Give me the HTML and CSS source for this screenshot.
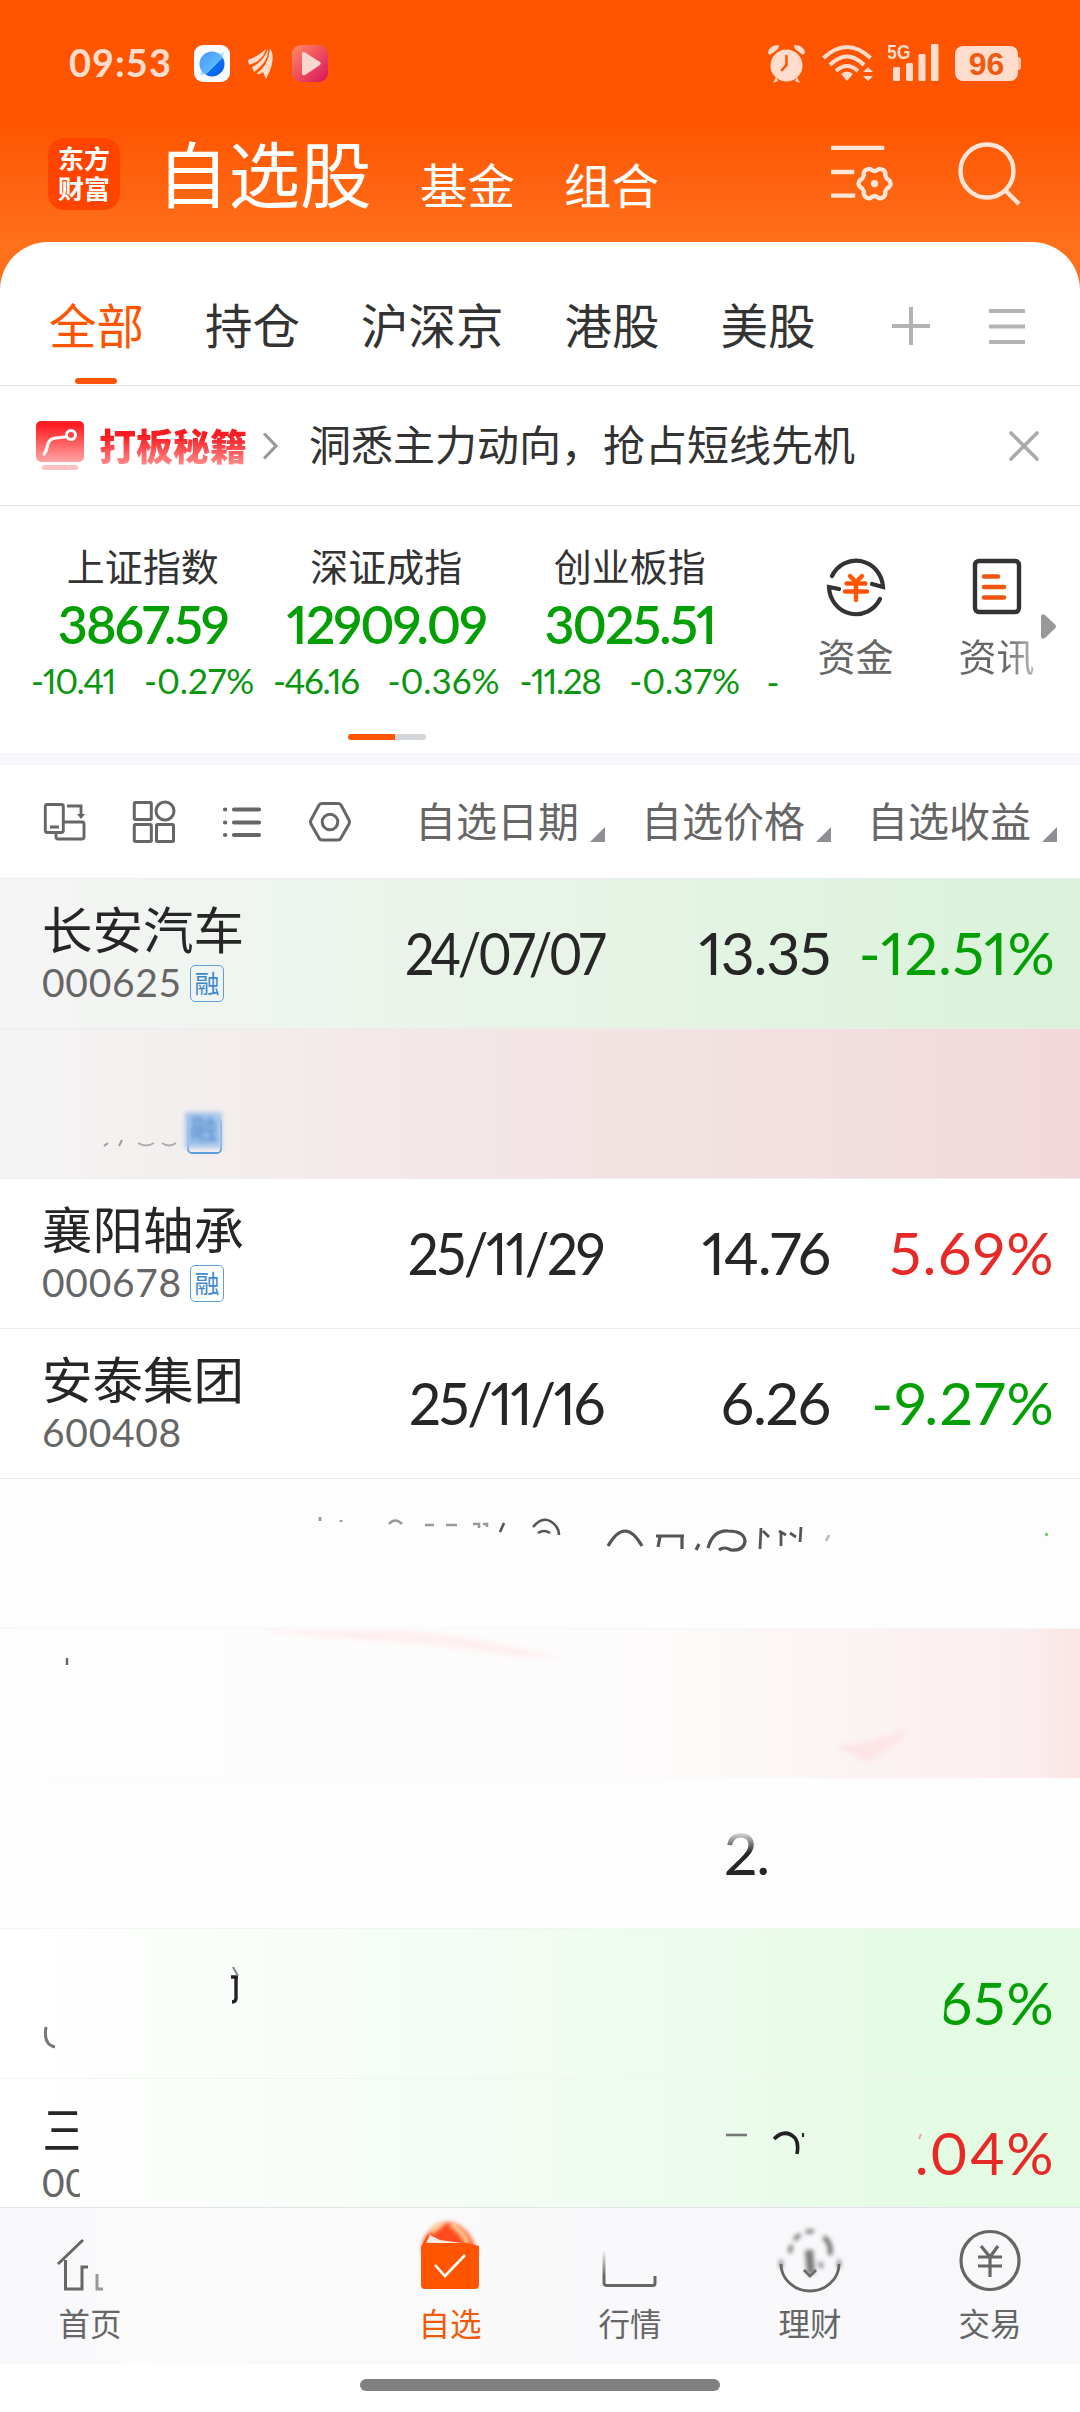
FILE: index.html
```html
<!DOCTYPE html>
<html lang="zh-CN">
<head>
<meta charset="utf-8">
<title>自选股</title>
<link rel="stylesheet" href="styles.css">
</head>
<body>
<div class="app">
  <div class="status">
    <span class="clock">09:53</span>
    <svg class="st-browser" width="36" height="37" viewBox="0 0 36 37">
      <defs>
        <linearGradient id="pl" x1="0" y1="0" x2="1" y2="1"><stop offset="0" stop-color="#4593fa"/><stop offset=".58" stop-color="#5cb9ff"/><stop offset=".6" stop-color="#0b6ef0"/><stop offset="1" stop-color="#0a5be0"/></linearGradient>
      </defs>
      <rect width="36" height="37" rx="9" fill="#f8fbff"/>
      <path d="M6 30 L10 21 L28 8 L30 7 L28 15 L13 29 Z" fill="#a9dcff"/>
      <circle cx="18" cy="19" r="12.500" fill="url(#pl)"/>
    </svg>
    <svg class="st-wing" width="27" height="31" viewBox="0 0 27 31" fill="#ffdccb">
      <path d="M0 12 Q9 9 18 1 Q15 13 1 17 Z"/>
      <path d="M20 1 Q21 14 6 24 L4 19 Q16 13 20 1 Z"/>
      <path d="M23 2 Q28 12 18 31 L15 24 Q10 28 9 25 Q20 18 22 1 Z"/>
    </svg>
    <svg class="st-play" width="36" height="37" viewBox="0 0 36 37">
      <defs><linearGradient id="pg" x1="0" y1="0" x2="1" y2="1"><stop offset="0" stop-color="#ff8a68"/><stop offset=".5" stop-color="#ee4f5c"/><stop offset="1" stop-color="#d8125f"/></linearGradient></defs>
      <rect width="36" height="37" rx="9" fill="url(#pg)"/>
      <path d="M10 8.500 Q10 6 13 7.500 L28 17 Q29.500 18.500 28 20 L13 30 Q10 31 10 28.500 Z" fill="#fbd5cf"/>
    </svg>
    <span class="grow"></span>
    <svg class="st-alarm" width="37" height="39" viewBox="0 0 37 39">
      <g fill="#ffdccb"><circle cx="18.500" cy="21.500" r="16"/><path d="M0 9 Q1 1 11 1 L10 5 L2 11 Z M37 9 Q36 1 26 1 L27 5 L35 11 Z M8 33 L5 39 L10 37 Z M29 33 L32 39 L27 37 Z"/></g>
      <path d="M18.500 12 V21 L14 26" fill="none" stroke="#ff5500" stroke-width="2.600" stroke-linecap="round"/>
    </svg>
    <svg class="st-wifi" width="52" height="37" viewBox="0 0 52 37" fill="none" stroke="#ffdccb" stroke-width="4">
      <path d="M1.500 13 Q25 -9 48.500 13"/><path d="M8 20 Q25 3 42 20"/><path d="M14 26 Q25 16 36 26"/>
      <path d="M19 29 Q25 24 31 29 L25 36 Z M41 27 L46 22 L51 27 Z M41 31 L46 36 L51 31 Z" fill="#ffdccb" stroke="none"/>
    </svg>
    <div class="signal">
      <span class="net">5G</span>
      <svg width="46" height="38" viewBox="0 0 46 38" fill="#ffdccb"><rect y="24" width="7" height="14" rx="1.500"/><rect x="13" y="20" width="7" height="18" rx="1.500"/><rect x="25.500" y="11" width="7" height="27" rx="1.500"/><rect x="38" y="1" width="7.500" height="37" rx="1.500"/></svg>
    </div>
    <div class="battery">96</div>
  </div>

  <header class="head">
    <div class="logo"><span>东方</span><span>财富</span></div>
    <h1>自选股</h1>
    <span class="sub sub-fund">基金</span>
    <span class="sub">组合</span>
    <span class="grow"></span>
    <svg class="filter" width="62" height="58" viewBox="0 0 64 60" fill="none" stroke="#ffe6d9" stroke-width="4.400">
      <path d="M0 5 H55 M0 30 H24 M0 54.500 H25"/>
      <path d="M36 28 Q40 25.500 42 28 Q45 30 48 28 Q50 25.500 54 28 Q57 30 56 33 Q57 37 60 38.500 Q63 42 60 45.500 Q57 47 56 50 Q57 54 54 56 Q50 58.500 48 56 Q45 54 42 56 Q40 58.500 36 56 Q33 54 34 50 Q33 47 30 45.500 Q27 42 30 38.500 Q33 37 34 33 Q33 30 36 28 Z"/>
      <circle cx="45" cy="42" r="3.800" fill="#ffe6d9" stroke="none"/>
    </svg>
    <svg class="search" width="64" height="66" viewBox="0 0 64 66" fill="none" stroke="#ffe6d9" stroke-width="4.400"><circle cx="30" cy="30" r="26.500"/><path d="M48 49 L62 63"/></svg>
  </header>

  <main class="sheet">
    <nav class="tabs">
      <span class="tab active">全部</span><span class="tab">持仓</span><span class="tab">沪深京</span><span class="tab">港股</span><span class="tab">美股</span>
      <svg class="plus" width="38" height="38" viewBox="0 0 38 38" stroke="#b3b3b3" stroke-width="4"><path d="M0 19 H38 M19 0 V38"/></svg>
      <svg class="menu" width="36" height="36" viewBox="0 0 36 36" stroke="#b3b3b3" stroke-width="4.200"><path d="M0 3 H36 M0 18.500 H36 M0 34 H36"/></svg>
    </nav>

    <section class="banner">
      <svg width="48" height="50" viewBox="0 0 48 50">
        <defs><linearGradient id="bn" x1="0" y1="0" x2="0" y2="1"><stop offset=".1" stop-color="#fd1c22"/><stop offset="1" stop-color="#ffa5a5"/></linearGradient></defs>
        <rect width="48" height="41" rx="5" fill="url(#bn)"/><rect x="6" y="44" width="36" height="5" rx="2" fill="#ffc2c2"/>
        <path d="M8 33 C13 28 9 18 20 17 L29 16" fill="none" stroke="#fff" stroke-width="3.200" stroke-linecap="round"/><circle cx="35" cy="14" r="4.500" fill="none" stroke="#fff" stroke-width="3"/>
      </svg>
      <span class="promo">打板秘籍</span>
      <svg class="chev" width="16" height="28" viewBox="0 0 16 28" fill="none" stroke="#999" stroke-width="3.200"><path d="M2 1.500 L14 14 L2 26.500"/></svg>
      <span class="promo-text">洞悉主力动向，抢占短线先机</span>
      <span class="grow"></span>
      <svg width="30" height="30" viewBox="0 0 30 30" stroke="#aaa" stroke-width="3.600" stroke-linecap="round"><path d="M2 2 L28 28 M28 2 L2 28"/></svg>
    </section>

    <section class="market">
      <div class="indexes">
        <div class="index"><b>上证指数</b><strong>3867.59</strong><p><span>-10.41</span><span>-0.27%</span></p></div>
        <div class="index"><b>深证成指</b><strong>12909.09</strong><p><span>-46.16</span><span>-0.36%</span></p></div>
        <div class="index"><b>创业板指</b><strong>3025.51</strong><p><span>-11.28</span><span>-0.37%</span></p></div>
        <div class="index next"><p>-</p></div>
      </div>
      <div class="quick">
        <div class="quick-item">
          <svg width="60" height="62" viewBox="0 0 60 62" fill="none" stroke="#333" stroke-width="4.200">
            <path d="M6 20 A27 28 0 0 1 57 31 L46 28" stroke-linecap="round"/><path d="M54 43 A27 28 0 0 1 3 31 L13 33" stroke-linecap="round"/>
            <path d="M24 20 L30 26 L36 20 M20.500 27.500 H39.500 M19 35.500 H41 M30 27 V44" stroke="#ff5500" stroke-width="4.400" stroke-linecap="round"/>
          </svg><span>资金</span>
        </div>
        <div class="quick-item fade">
          <svg width="60" height="62" viewBox="0 0 60 62" fill="none" stroke="#333" stroke-width="4.400">
            <rect x="8" y="5" width="44" height="51" rx="4"/>
            <path d="M17 20.500 H31 M17 31 H37 M17 41.500 H37" stroke="#f0560f" stroke-width="4.600" stroke-linecap="round"/>
          </svg><span>资讯</span>
        </div>
        <svg class="more" width="15" height="25" viewBox="0 0 15 25" fill="#999"><path d="M0 2 Q1 -1 4 1 L14 10.500 Q16 12.500 14 14.500 L4 24 Q1 26 0 23 Z"/></svg>
      </div>
    </section>
    <div class="pager"><i></i></div>

    <section class="columns">
      <div class="tools">
        <svg width="42" height="42" viewBox="0 0 42 42" fill="none" stroke="#666" stroke-width="2.900">
          <rect x="1.300" y="3.500" width="18" height="28" rx="2"/><path d="M6 26 H15 M23 5 H37 V14 M19 21 H38 Q40 21 40 23 V36 Q40 38 38 38 H14 Q12 38 12 36 V32"/><path d="M33 13 H41 L37 18 Z" fill="#666" stroke="none"/>
        </svg>
        <svg width="42" height="42" viewBox="0 0 42 42" fill="none" stroke="#666" stroke-width="3"><rect x="1.300" y="1.500" width="17" height="17" rx="1"/><circle cx="32" cy="10" r="9"/><rect x="1.300" y="23.500" width="17" height="17" rx="1"/><rect x="23.500" y="23.500" width="17" height="17" rx="1"/></svg>
        <svg width="40" height="42" viewBox="0 0 40 42" fill="none" stroke="#666" stroke-width="4.200" stroke-linecap="round"><path d="M3 8.500 H3.200 M3 21.500 H3.200 M3 34 H3.200 M12 8.500 H37 M12 21.500 H37 M12 34 H37"/></svg>
        <svg width="42" height="42" viewBox="0 0 42 42" fill="none" stroke="#666" stroke-width="3"><path d="M13 2.500 H29 Q31 2.500 32 4 L40 19 Q41 21 40 23 L32 37 Q31 39 29 39 H13 Q11 39 10 37 L2 23 Q1 21 2 19 L10 4 Q11 2.500 13 2.500 Z"/><circle cx="21" cy="21" r="7.800"/></svg>
      </div>
      <span class="col">自选日期<i></i></span>
      <span class="col">自选价格<i></i></span>
      <span class="col">自选收益<i></i></span>
    </section>

    <section class="list">
      <div class="row tint-green">
        <div class="stock"><span class="name">长安汽车</span><span class="code">000625<em>融</em></span></div>
        <span class="num date tight">24/07/07</span><span class="num">13.35</span><span class="num down long">-12.51%</span>
      </div>
      <div class="row tint-red">
        <svg class="marks" width="240" height="150" viewBox="0 0 240 150" fill="none">
          <g stroke="#777" stroke-width="2" opacity=".7"><path d="M104 117 L108 114 M119 117 L122 111"/><path d="M138 114 Q146 119 154 114 M162 114 Q169 119 176 114" opacity=".8"/></g>
          <rect x="188" y="90" width="33" height="34" rx="4" stroke="#5b9fdd" stroke-width="1.800"/>
        </svg>
        <span class="smudge">融</span>
      </div>
      <div class="row">
        <div class="stock"><span class="name">襄阳轴承</span><span class="code">000678<em>融</em></span></div>
        <span class="num date">25/11/29</span><span class="num">14.76</span><span class="num up">5.69%</span>
      </div>
      <div class="row">
        <div class="stock"><span class="name">安泰集团</span><span class="code">600408</span></div>
        <span class="num date wide">25/11/16</span><span class="num">6.26</span><span class="num down">-9.27%</span>
      </div>
      <div class="row worn">
        <svg class="marks" width="1080" height="150" viewBox="0 0 1080 150" fill="none" stroke="#555" stroke-width="2.600">
          <g class="softer">
          <path d="M320 38 V42 M341 41 V43 M389 45 Q395 38 402 45 M425 46 H434 M446 46 H457 M473 45 H479 V49 M483 45 H487 V48" stroke="#999"/>
          <path d="M504 44 L500 53 M533 48 Q545 34 556 47 Q559 51 559 56 M538 54 Q544 50 550 54"/>
          <path d="M608 67 Q625 37 642 67 M656 57 H684 M660 58 L658 68 M682 57 V70 M699 65 L696 71" stroke-width="3.200"/>
          <path d="M708 69 Q713 51 728 52 Q744 52 745 62 Q744 72 731 71 Q724 67 719 71" stroke-width="3.200"/>
          <path d="M761 49 L760 70 M763 52 L769 58 M781 53 V67 M779 52 L786 56 M801 48 L800 63 M796 58 L790 54" stroke-width="2.800"/>
          <path d="M829 56 L826 62" stroke="#bbb"/>
          </g>
          <path d="M1046 54 L1047 57" stroke="#6c6"/>
        </svg>
      </div>
      <div class="row worn-red">
        <svg class="marks" width="1080" height="150" viewBox="0 0 1080 150">
          <path d="M67 29 V36" stroke="#666" stroke-width="2.400"/>
          <path class="soft" d="M255 1 L400 1 Q490 8 560 30 L520 28 L440 17 L320 8 Z" fill="#fff0f0"/>
          <path class="soft" d="M836 117 L872 112 L906 100 L902 110 L868 134 Z" fill="#fde5e6"/>
        </svg>
      </div>
      <div class="row worn faint">
        <span></span><span></span><span class="num part-two">2.</span>
      </div>
      <div class="row worn-green">
        <svg class="marks" width="250" height="150" viewBox="0 0 250 150" fill="none"><path d="M236 48 V69 Q236 73 232 73 M231 48 H238" stroke="#222" stroke-width="3.400"/><path d="M233 38 L238 47" stroke="#888" stroke-width="2"/><path d="M46 98 Q43 116 55 118" stroke="#777" stroke-width="3"/></svg>
        <span></span><span></span><span></span><span class="num down"><span class="part-six">65%</span></span>
      </div>
      <div class="row worn-green last">
        <div class="stock cut"><span class="name">三</span><span class="code">00</span></div>
        <svg class="marks" width="1080" height="130" viewBox="0 0 1080 130" fill="none" stroke="#222" stroke-width="3.600"><g class="softer"><path d="M726 56 H747" stroke="#777" stroke-width="2.600"/><path d="M774 60 Q785 49 795 59 Q799 64 797 75"/><path d="M803 54 V58" stroke-width="2"/><path d="M921 55 L919 60" stroke="#f4a0a0" stroke-width="2"/></g></svg>
        <span></span><span></span><span class="num up">.04%</span>
      </div>
    </section>
  </main>

  <footer class="bar">
    <div class="item i1">
      <svg width="64" height="70" viewBox="0 0 64 70" fill="none" stroke="#666" stroke-width="3"><path d="M0 32 L25 8 M7.500 28 V57 H24 V35 H30"/><path d="M39 42 V57 H45" stroke="#999"/></svg>
      <span>首页</span>
    </div>
    <div class="item i3 on">
      <svg width="64" height="70" viewBox="0 0 64 70" fill="none">
        <path class="soft" d="M4 14 Q8 -4 30 -10 Q53 -6 60 24 L46 22 L4 18 Z" fill="#ff4b1d"/>
        <path class="soft" d="M33 -8 Q46 0 50 13 M13 0 L24 -9" stroke="#ffd9a0" stroke-width="5"/>
        <path d="M3 15 L10 2 Q12 8 7 11 H48 L61 14 V53 Q61 57 57 57 H7 Q3 57 3 53 Z" fill="#ff5500"/>
        <path d="M8 11 L12 3 L22 8 L44 11 Z" fill="#fde9e0" class="softer"/>
        <path d="M17 33 L27 44 L47 23" stroke="#fff" stroke-width="2.600"/>
      </svg>
      <span>自选</span>
    </div>
    <div class="item i4">
      <svg width="64" height="70" viewBox="0 0 64 70" fill="none" stroke="#666" stroke-width="3">
        <defs><linearGradient id="fd" x1="0" y1="0" x2="0" y2="1"><stop offset="0" stop-color="#666" stop-opacity="0"/><stop offset=".75" stop-color="#666"/></linearGradient></defs>
        <path d="M6 18 V51 Q6 53.500 9 53.500 H55 Q57 53.500 57 51 V44" stroke="url(#fd)"/>
      </svg>
      <span>行情</span>
    </div>
    <div class="item i5">
      <svg width="64" height="70" viewBox="0 0 64 70" fill="none" stroke="#666" stroke-width="2.800">
        <path d="M3 32 A29 27 0 0 0 61 32"/>
        <path d="M26 38 L32 44 L38 38"/>
        <g class="soft"><path d="M12 21 A22 22 0 0 1 40 0" stroke-dasharray="8 6" stroke-width="3.500"/><path d="M46 5 Q54 12 52 23" stroke-width="4.500"/><path d="M31 18 L33 42" stroke-width="8" stroke="#777"/><path d="M3 36 V28 M61 36 V28 M42 30 L44 36" stroke-width="3"/></g>
      </svg>
      <span>理财</span>
    </div>
    <div class="item i6">
      <svg width="64" height="70" viewBox="0 0 64 70" fill="none" stroke="#666" stroke-width="3.200"><circle cx="32" cy="28.500" r="29"/><path d="M23 14 L32 25 L40 14 M20 25 H44 M20 34 H44 M32 25 V45"/></svg>
      <span>交易</span>
    </div>
  </footer>
  <div class="gesture"><i></i></div>
</div>
</body>
</html>
```
FILE: styles.css
```css
* { box-sizing: border-box; }
body { margin: 0; background: #fff; font-family: "Noto Sans CJK SC", sans-serif; color: #262626; }
h1, p { margin: 0; }
b, strong, em, i { font-style: normal; font-weight: 400; }
svg { display: block; flex: none; overflow: visible; }
.app {
  width: 1080px; height: 2412px; overflow: hidden; display: flex; flex-direction: column;
  background: linear-gradient(#ff5500 0, #ff5500 122px, #ff6410 190px, #ff701a 242px, #ff701a 320px, #fff 320px);
}
.grow { flex: 1; }

.status { height: 126px; padding: 0 59px 0 69px; display: flex; align-items: center; font-family: Lato, sans-serif; color: #ffdccb; }
.clock { font-size: 38px; font-weight: 700; width: 125px; letter-spacing: 1px; margin-top: -3px; }
.st-wing { margin: 0 17px 0 18px; }
.st-wifi { margin: 0 13px 0 17px; }
.signal { display: flex; align-items: center; width: 52px; height: 38px; padding-left: 6px; position: relative; margin-top: -2px; }
.net { position: absolute; left: 0; top: 0; font: 700 20px/19px "Liberation Sans", sans-serif; transform: scaleX(.88); transform-origin: 0 0; }
.battery { position: relative; margin-left: 16px; margin-right: 3px; width: 63px; height: 35px; border-radius: 8px; background: #ffdccb; color: #ef5a12; font: 700 32px/36px "Liberation Sans", sans-serif; text-align: center; }
.battery::after { content: ""; position: absolute; right: -3px; top: 11px; width: 3px; height: 13px; background: #ffc4a8; border-radius: 0 3px 3px 0; }

.head { height: 116px; padding: 0 58px 0 48px; display: flex; align-items: flex-start; color: #fff; }
.logo { width: 72px; height: 72px; margin-top: 12px; border-radius: 16px; background: #ff4400; display: flex; flex-direction: column; align-items: center; padding-top: 5px; }
.logo span { font-size: 26px; font-weight: 700; line-height: 30px; }
h1 { margin: 5px 0 0 37px; font-size: 71.500px; font-weight: 400; line-height: 80px; width: 263px; }
.sub { margin-top: 30px; font-size: 47.500px; line-height: 56px; white-space: nowrap; }
.sub-fund { width: 144px; }
.filter { margin: 17px 64px 0 0; }
.search { margin: 15px 1px 0 0; }

.sheet { background: #fff; border-radius: 48px 48px 0 0; }
.tabs { height: 144px; padding-left: 49px; display: flex; align-items: center; border-bottom: 1.500px solid #e5e5e5; font-size: 47.500px; color: #333; position: relative; }
.tab { line-height: 60px; margin: 20px 61px 0 0; white-space: nowrap; }
.tab:nth-child(5) { margin-right: 76px; }
.tab.active { color: #ff5500; position: relative; }
.tab.active::after { content: ""; position: absolute; left: 26px; top: 84px; width: 42px; height: 6px; border-radius: 3px; background: #ff5500; }
.plus, .menu { margin-top: 24px; }
.menu { margin-left: 59px; }

.banner { height: 120px; padding: 0 41px 0 36px; display: flex; align-items: center; border-bottom: 1.500px solid #e5e5e5; }
.promo { margin-left: 15px; font-size: 37px; font-weight: 900; line-height: 44px; margin-top: -2px; background: linear-gradient(#fb1c22 30%, #ff8c8c 95%); -webkit-background-clip: text; background-clip: text; color: transparent; }
.chev { margin: 0 31px 0 15px; }
.promo-text { font-size: 42px; line-height: 50px; color: #333; margin-top: -6px; }

.market { height: 222px; display: flex; overflow: hidden; }
.indexes { width: 780px; display: flex; overflow: hidden; flex: none; padding-left: 21px; }
.index { width: 243.500px; flex: none; display: flex; flex-direction: column; align-items: center; padding-top: 35px; }
.index b { font-size: 38px; line-height: 48px; color: #333; }
.index strong { font: 600 52px/62px Lato, sans-serif; color: #049f04; margin-top: 4px; letter-spacing: -1.900px; font-variant-numeric: proportional-nums; }
.index p { font: 400 35px/40px Lato, sans-serif; color: #0a960f; margin-top: 5px; display: flex; gap: 29px; white-space: nowrap; letter-spacing: -1.400px; font-variant-numeric: proportional-nums; }
.index p span + span { letter-spacing: 0; }
.index.next { align-items: flex-start; padding: 155px 0 0 15px; }
.index.next p { margin: 0; }
.quick { flex: 1; display: flex; }
.quick-item { width: 141px; padding: 50px 0 0 10px; display: flex; flex-direction: column; align-items: center; font-size: 38px; color: #666; line-height: 48px; gap: 13px; }
.quick-item span { font-size: 38px; }
.fade span { background: linear-gradient(90deg, #666 60%, #bbb); -webkit-background-clip: text; background-clip: text; color: transparent; }
.more { margin: 108px 0 0 -21px; }
.pager { height: 37px; padding: 6px 0 0 348px; border-bottom: 12px solid #f5f7fa; }
.pager i { display: block; width: 78px; height: 6px; border-radius: 3px; background: linear-gradient(90deg, #ff5500 47px, #d2d5da 47px); }

.columns { height: 113px; display: flex; align-items: center; color: #666; }
.tools { width: 415px; padding-left: 44px; display: flex; gap: 47px; flex: none; }
.col { width: 226px; font-size: 41px; line-height: 50px; display: flex; align-items: flex-end; margin-top: -5px; white-space: nowrap; }
.col:last-child { width: auto; }
.col i { margin: 0 0 2px 11px; border-left: 15px solid transparent; border-bottom: 15px solid #8e8e93; }

.row { position: relative; height: 150px; border-top: 1.500px solid #ececee; padding: 0 27px 0 42px; display: grid; grid-template-columns: 1fr 210px 224px 223px; grid-template-rows: 149px; }
.stock { padding-top: 18px; display: flex; flex-direction: column; }
.name { font-size: 50.500px; line-height: 60px; }
.code { display: flex; align-items: center; font: 400 39px/44px Lato, sans-serif; letter-spacing: .7px; color: #666; margin-top: 3px; }
.code em { margin: 2px 0 0 8px; width: 34px; height: 37px; border: 1.500px solid #5b9fdd; border-radius: 5px; font: 400 25px/32px "Noto Sans CJK SC", sans-serif; letter-spacing: 0; color: #4088cc; text-align: center; }
.num { font: 400 59px/147px Lato, sans-serif; text-align: right; white-space: nowrap; letter-spacing: -1.200px; font-variant-numeric: proportional-nums; }
.date { letter-spacing: -2.500px; justify-self: end; transform: scaleX(.925); transform-origin: 100% 50%; margin-right: 3px; }
.tight { letter-spacing: -4px; transform: scaleX(.88); }
.wide { transform: scaleX(.96); }
.up { color: #e62a28; letter-spacing: 1.400px; margin-right: -2px; }
.down { color: #049f04; letter-spacing: 1.200px; margin-right: -2px; }
.long { letter-spacing: .2px; }
.tint-green { background: linear-gradient(90deg, #f5f5f5, #e4f4e4 65%, #d9f2d9); }
.tint-red { background: linear-gradient(90deg, #f4f4f4, #f3e9e8 35%, #f2dfdf 75%, #f3d8d9); }
.marks { position: absolute; left: 0; top: 0; }
.soft { filter: blur(2px); }
.softer { filter: blur(.7px); }
.smudge { position: absolute; left: 185px; top: 83px; width: 37px; height: 36px; background: #a8c8ec; color: #4c86cc; font-size: 28px; line-height: 32px; text-align: center; filter: blur(2px); }
.worn { background: #fdfdfd; }
.faint { border-top-color: #fbfbfb; }
.worn-red { background: linear-gradient(90deg, #fefefe, #fdfbfb 60%, #fcf4f4 78%, #fbeded 96%, #fbe4e4); border-top-color: #f7f5f5; }
.worn-green { background: linear-gradient(90deg, #fff 2%, #f9fdf9 25%, #edfbee 65%, #e2fbe2 90%); border-top-color: #eef6ee; }
.part-two { text-align: left; padding-left: 118px; -webkit-mask-image: linear-gradient(transparent 50px, #000 74px); mask-image: linear-gradient(transparent 50px, #000 74px); }
.part-six { display: inline-block; clip-path: polygon(13px 0, 100% 0, 100% 100%, 5px 100%, 5px 60%); }
.last { height: 129px; overflow: hidden; }
.last .cut { width: 39px; overflow: hidden; clip-path: polygon(0 0, 34px 0, 39px 100%, 0 100%); }

.bar { height: 157px; border-top: 1.500px solid #e4e4e8; background: linear-gradient(90deg, #f8f8fb 70px, #fbfbfb 130px, #fafafb 330px, #f9f9fb 600px, #f8f8fb 900px); display: grid; grid-template-columns: repeat(6, 180px); }
.item { display: flex; flex-direction: column; align-items: center; padding-top: 24px; color: #666; }
.item span { font-size: 31.500px; line-height: 40px; }
.i3 { grid-column: 3; }
.on { color: #f05a0a; }
.gesture { flex: 1; background: #fff; padding: 15px 0 0 360px; }
.gesture i { display: block; width: 360px; height: 12px; border-radius: 6px; background: #808080; }
```
